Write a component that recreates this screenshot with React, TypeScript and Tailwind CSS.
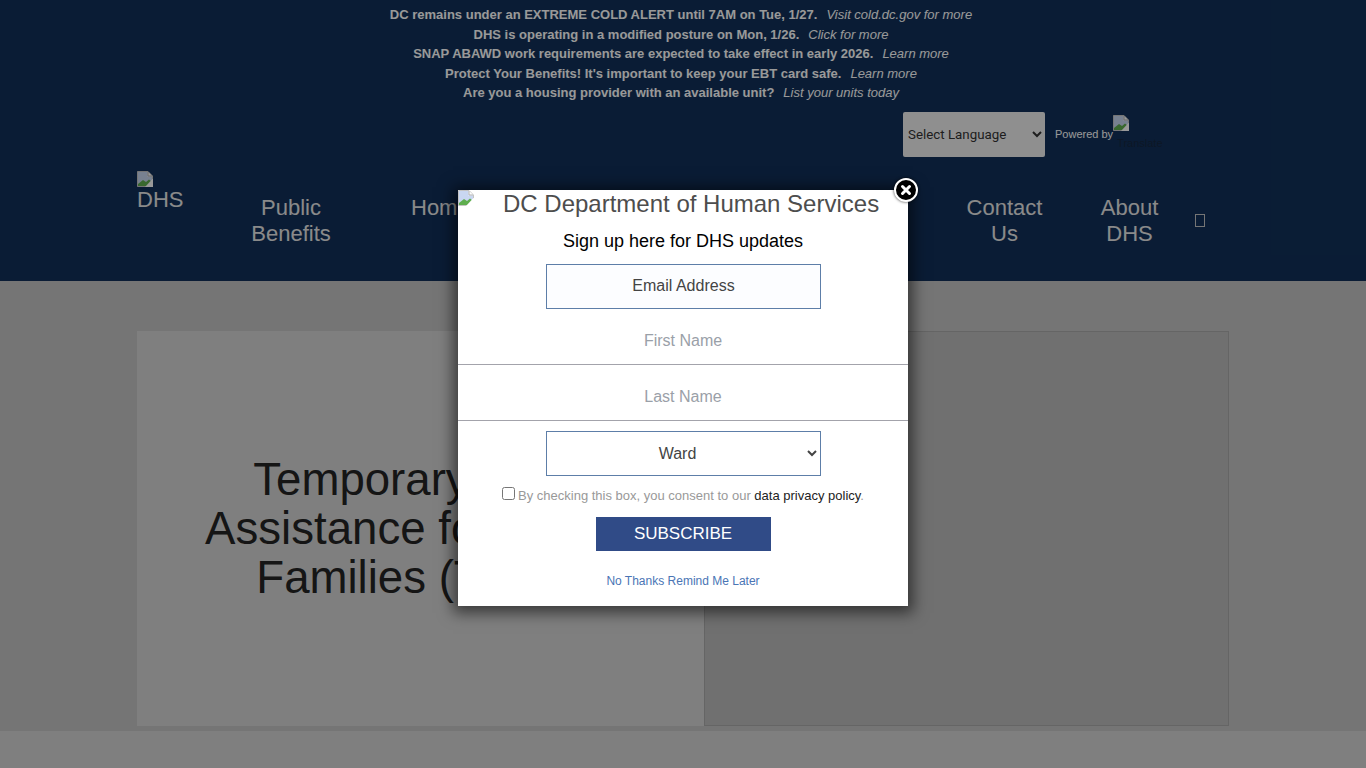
const notices = [
  ["DC remains under an EXTREME COLD ALERT until 7AM on Tue, 1/27.", "Visit cold.dc.gov for more"],
  ["DHS is operating in a modified posture on Mon, 1/26.", "Click for more"],
  ["SNAP ABAWD work requirements are expected to take effect in early 2026.", "Learn more"],
  ["Protect Your Benefits! It's important to keep your EBT card safe.", "Learn more"],
  ["Are you a housing provider with an available unit?", "List your units today"],
];

function BrokenImage() {
  return (
    <svg width="16" height="16" viewBox="0 0 16 16" className="shrink-0">
      <path d="M0.5 0.5H11L15.5 5V15.5H0.5Z" fill="#fff" stroke="#c4c4c4" />
      <path d="M1 1H10.5V5.5H15V9L10 13L1 13Z" fill="#c9d7f1" />
      <path d="M1 13L6 9L9 11L12 8.5L15 11V15H1Z" fill="#5fae4f" />
      <path d="M11 1V5H15" fill="#fff" stroke="#b0b0b0" />
      <path d="M15.5 8L8 16H16V8Z" fill="#fff" />
    </svg>
  );
}

function Header() {
  return (
    <header className="h-[281px] bg-[#113059]">
      <div className="pt-[5px] pr-[4px] h-[112px] text-center text-[13px] leading-[19.5px] text-white">
        {notices.map(([text, link]) => (
          <p key={link + text.length}>
            <b>{text}</b>
            <i className="ml-[9px]">{link}</i>
          </p>
        ))}
      </div>
      <div className="flex h-[45px] pl-[903px]">
        <select className="w-[142px] h-[45px] pl-[1px] rounded-[2px] bg-[#efefef] text-[#333] text-[13.33px] font-['Roboto',sans-serif]">
          <option>Select Language</option>
        </select>
        <span className="ml-[10px] self-center text-[11px] text-white">Powered by</span>
        <div className="relative mt-[3px] w-[54px] text-[11px] leading-[13px] text-[#16263f]">
          <BrokenImage />
          <span className="absolute left-[4px] top-[22px]">Translate</span>
        </div>
      </div>
      <nav className="flex pl-[137px] pt-[14px] text-[22px] leading-[26px] text-[#e6e6e6]">
        <a className="block w-[46px]">
          <BrokenImage />
          <span className="block">DHS</span>
        </a>
        <a className="block w-[154px] ml-[31px] mt-[24px] text-center">
          Public
          <br />
          Benefits
        </a>
        <a className="block w-[531px] ml-[43px] mt-[24px]">Homelessness</a>
        <a className="block w-[125px] mt-[24px] text-center">
          Contact
          <br />
          Us
        </a>
        <a className="block w-[125px] mt-[24px] text-center">
          About
          <br />
          DHS
        </a>
        <span className="block w-[10px] h-[13px] ml-[3px] mt-[43px] border border-[#c4c4c4]" />
      </nav>
    </header>
  );
}

function Main() {
  return (
    <main className="h-[450px] bg-[#c3c3c3] pl-[137px] pr-[137px] pt-[50px]">
      <div className="flex h-[395px]">
        <div className="flex w-[567px] items-center justify-center bg-[#d4d4d4]">
          <h1 className="text-center text-[45.6px] leading-[49px] text-[#242424]">
            Temporary Cash
            <br />
            Assistance for Needy
            <br />
            Families (TANF)
          </h1>
        </div>
        <div className="flex-1 border border-[#a8a8a8] bg-[#bbbbbb]" />
      </div>
    </main>
  );
}

function SignupModal() {
  return (
    <div className="absolute left-[458px] top-[190px] w-[450px] h-[416px] bg-white shadow-[0_2px_14px_5px_rgba(0,0,0,0.55)]">
      <button className="absolute -right-[10px] -top-[12px] flex h-[24px] w-[24px] items-center justify-center rounded-full border-2 border-white bg-black shadow-[0_0_3px_rgba(0,0,0,0.8)]">
        <svg width="12" height="12" viewBox="0 0 12 12">
          <path d="M2.5 2.5L9.5 9.5M9.5 2.5L2.5 9.5" stroke="#fff" strokeWidth="3" strokeLinecap="round" />
        </svg>
      </button>
      <div className="flex h-[28px]">
        <BrokenImage />
        <h2 className="ml-[29px] text-[24px] leading-[28px] text-[#4d4d4d] whitespace-nowrap">
          DC Department of Human Services
        </h2>
      </div>
      <p className="mt-[12px] text-center text-[18px] leading-[22px] text-black">
        Sign up here for DHS updates
      </p>
      <input
        placeholder="Email Address"
        className="mt-[12px] mx-[88px] block h-[45px] w-[275px] border border-[#5d7ea8] bg-[#fcfdff] pb-[2px] text-center text-[16px] placeholder:text-[#444] outline-none"
      />
      <input
        placeholder="First Name"
        className="block h-[56px] w-full border-b border-[#a3a3ab] pt-[8px] text-center text-[16px] placeholder:text-[#9aa0a8] outline-none"
      />
      <input
        placeholder="Last Name"
        className="block h-[56px] w-full border-b border-[#a3a3ab] pt-[8px] text-center text-[16px] placeholder:text-[#9aa0a8] outline-none"
      />
      <select className="mt-[10px] mx-[88px] block h-[45px] w-[275px] border border-[#5d7ea8] bg-white text-[16px] text-[#444] [text-align-last:center]">
        <option>Ward</option>
      </select>
      <label className="mt-[10px] flex h-[18px] items-center justify-center text-[13px] text-[#999]">
        <input type="checkbox" className="mr-[3px] -mt-[3px]" />
        <span className="pt-[1px]">
          By checking this box, you consent to our <a className="text-[#222]">data privacy policy</a>.
        </span>
      </label>
      <button className="mx-auto mt-[13px] block h-[34px] w-[175px] bg-[#304b87] text-[17px] text-white">
        SUBSCRIBE
      </button>
      <a className="mt-[22px] block text-center text-[12px] leading-[16px] text-[#4a75b5]">
        No Thanks Remind Me Later
      </a>
    </div>
  );
}

export default function App() {
  return (
    <div className="relative h-[768px] overflow-hidden bg-[#d4d4d4] font-['Liberation_Sans',Arial,sans-serif]">
      <Header />
      <Main />
      <div className="absolute inset-0 bg-black/40" />
      <SignupModal />
    </div>
  );
}
